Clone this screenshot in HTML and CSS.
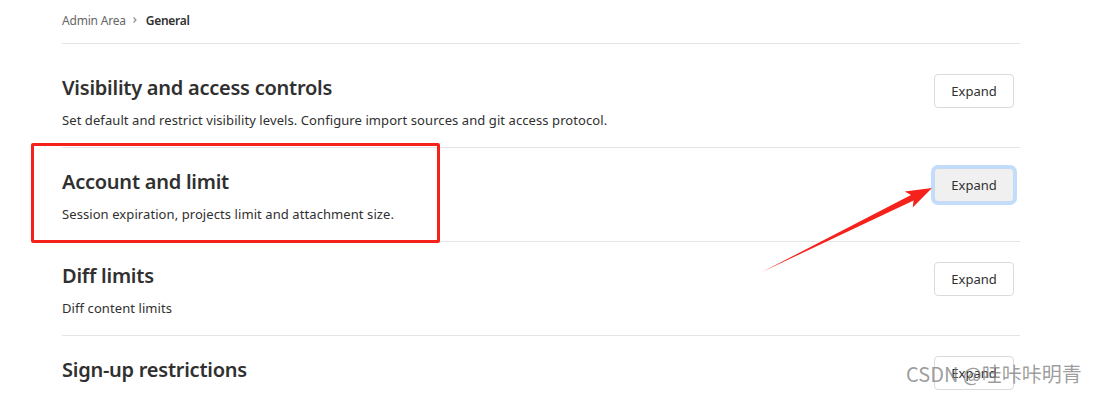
FILE: index.html
```html
<!DOCTYPE html>
<html>
<head>
<meta charset="utf-8">
<link rel="stylesheet" href="styles.css">
</head>
<body>
<div class="page">
  <nav class="crumbs">
    <span class="crumb">Admin Area</span>
    <svg class="chev" width="8" height="8" viewBox="0 0 8 8"><path d="M2.5 1.5 L5 4 L2.5 6.5" fill="none" stroke="#8a8a8a" stroke-width="1.1"/></svg>
    <span class="crumb current">General</span>
  </nav>
  <section class="sec first">
    <div class="info">
      <h2>Visibility and access controls</h2>
      <p>Set default and restrict visibility levels. Configure import sources and git access protocol.</p>
    </div>
    <button class="btn">Expand</button>
  </section>
  <section class="sec">
    <div class="info">
      <h2>Account and limit</h2>
      <p>Session expiration, projects limit and attachment size.</p>
    </div>
    <button class="btn focus">Expand</button>
  </section>
  <section class="sec">
    <div class="info">
      <h2>Diff limits</h2>
      <p>Diff content limits</p>
    </div>
    <button class="btn">Expand</button>
  </section>
  <section class="sec last">
    <div class="info">
      <h2>Sign-up restrictions</h2>
    </div>
    <button class="btn">Expand</button>
  </section>
</div>
<div class="redbox"></div>
<svg class="arrow" width="1094" height="393" viewBox="0 0 1094 393">
  <polygon points="762,272 913.6,200.5 912.7,207.6 932,188 904.7,191.6 911,195.1" fill="#f5221b"/>
</svg>
<div class="watermark">CSDN @哇咔咔明青</div>
</body>
</html>
```
FILE: styles.css
```css
html, body {
  margin: 0;
  padding: 0;
  background: #fff;
  height: 393px;
  overflow: hidden;
}
body {
  font-family: "Noto Sans", "Open Sans", "Liberation Sans", sans-serif;
  color: #303030;
  position: relative;
}
.page {
  margin-left: 62px;
  width: 958px;
}
.crumbs {
  border-bottom: 1px solid #e5e5e5;
  display: flex;
  align-items: center;
  gap: 5px;
  padding-bottom: 3px;
  box-sizing: border-box;
  height: 44px;
  font-size: 12px;
  letter-spacing: -0.2px;
}
.crumb { color: #666; }
.crumb.current { color: #303030; font-weight: 600; margin-left: 2px; letter-spacing: -0.3px; }
.sec {
  display: flex;
  justify-content: space-between;
  align-items: flex-start;
  padding: 20px 6px 17px 0;
  border-bottom: 1px solid #e5e5e5;
}
.sec.first { margin-top: 10px; }
.sec.last { border-bottom: none; }
.info h2 {
  margin: 0;
  font-size: 20px;
  line-height: 28px;
  font-weight: 600;
  letter-spacing: -0.25px;
  color: #303030;
}
.info p {
  margin: 8px 0 0;
  font-size: 13px;
  line-height: 20px;
  letter-spacing: 0.08px;
  color: #303030;
}
.btn {
  width: 80px;
  height: 34px;
  border: 1px solid #dbdbdb;
  border-radius: 4px;
  background: #fff;
  font-family: inherit;
  font-size: 13px;
  color: #303030;
  padding: 0;
}
.btn.focus {
  background: #f0f0f0;
  border-color: #c7daf0;
  box-shadow: 0 0 0 3px #c2dcfb;
}
.redbox {
  position: absolute;
  left: 31px;
  top: 143px;
  width: 403px;
  height: 94px;
  border: 3px solid #f5221b;
  border-radius: 2px;
}
.arrow {
  position: absolute;
  left: 0;
  top: 0;
}
.watermark {
  position: absolute;
  left: 906px;
  top: 361px;
  font-family: "Noto Sans CJK SC", sans-serif;
  font-size: 20px;
  line-height: 26px;
  color: rgba(125, 125, 125, 0.75);
  white-space: nowrap;
}
```
